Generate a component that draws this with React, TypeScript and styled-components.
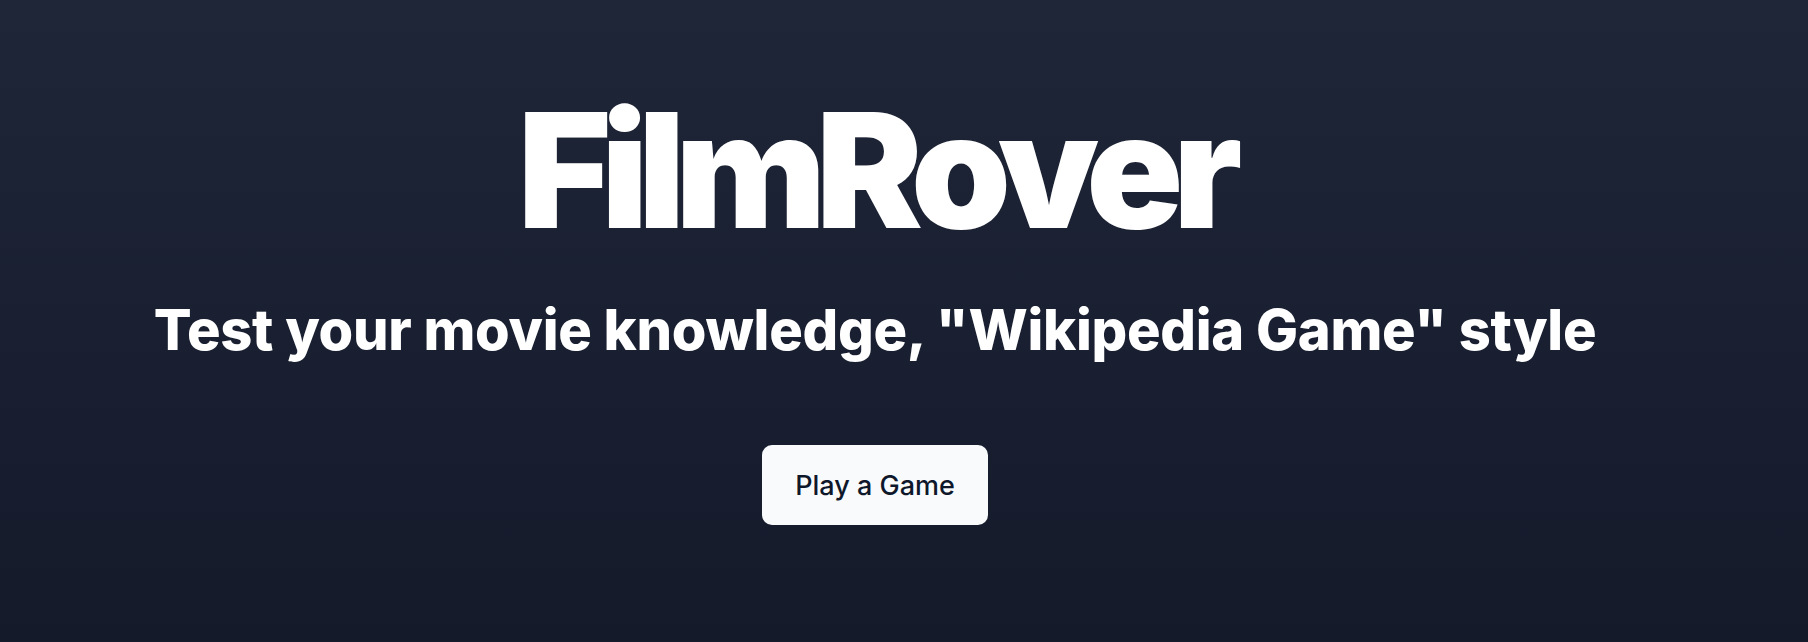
import React from "react";
import styled, { createGlobalStyle } from "styled-components";

const Global = createGlobalStyle`
  html, body { margin: 0; padding: 0; }
  body { font-family: Inter, "Noto Sans", sans-serif; }
`;

const Page = styled.main`
  min-height: 642px;
  box-sizing: border-box;
  background: linear-gradient(180deg, #1f2638 0%, #141a2a 100%);
  display: flex;
  flex-direction: column;
  align-items: center;
  padding: 90px 58px 0 0;
`;

const Title = styled.h1`
  margin: 0;
  font-family: Inter, sans-serif;
  font-size: 160px;
  line-height: 160px;
  font-weight: 900;
  letter-spacing: -0.064em;
  color: #ffffff;
`;

const Subtitle = styled.h2`
  margin: 52px 0 0;
  font-family: Inter, sans-serif;
  font-size: 56px;
  line-height: 56px;
  font-weight: 800;
  letter-spacing: -0.005em;
  color: #ffffff;
`;

const PlayButton = styled.button`
  margin-top: 87px;
  height: 80px;
  padding: 0 33px;
  border: none;
  border-radius: 10px;
  background: #f8fafc;
  color: #0f172a;
  font-family: Inter, sans-serif;
  font-size: 27px;
  font-weight: 500;
  display: flex;
  align-items: center;
  justify-content: center;
  cursor: pointer;
`;

export default function App() {
  return (
    <>
      <Global />
      <Page>
        <Title>FilmRover</Title>
        <Subtitle>Test your movie knowledge, "Wikipedia Game" style</Subtitle>
        <PlayButton>Play a Game</PlayButton>
      </Page>
    </>
  );
}
